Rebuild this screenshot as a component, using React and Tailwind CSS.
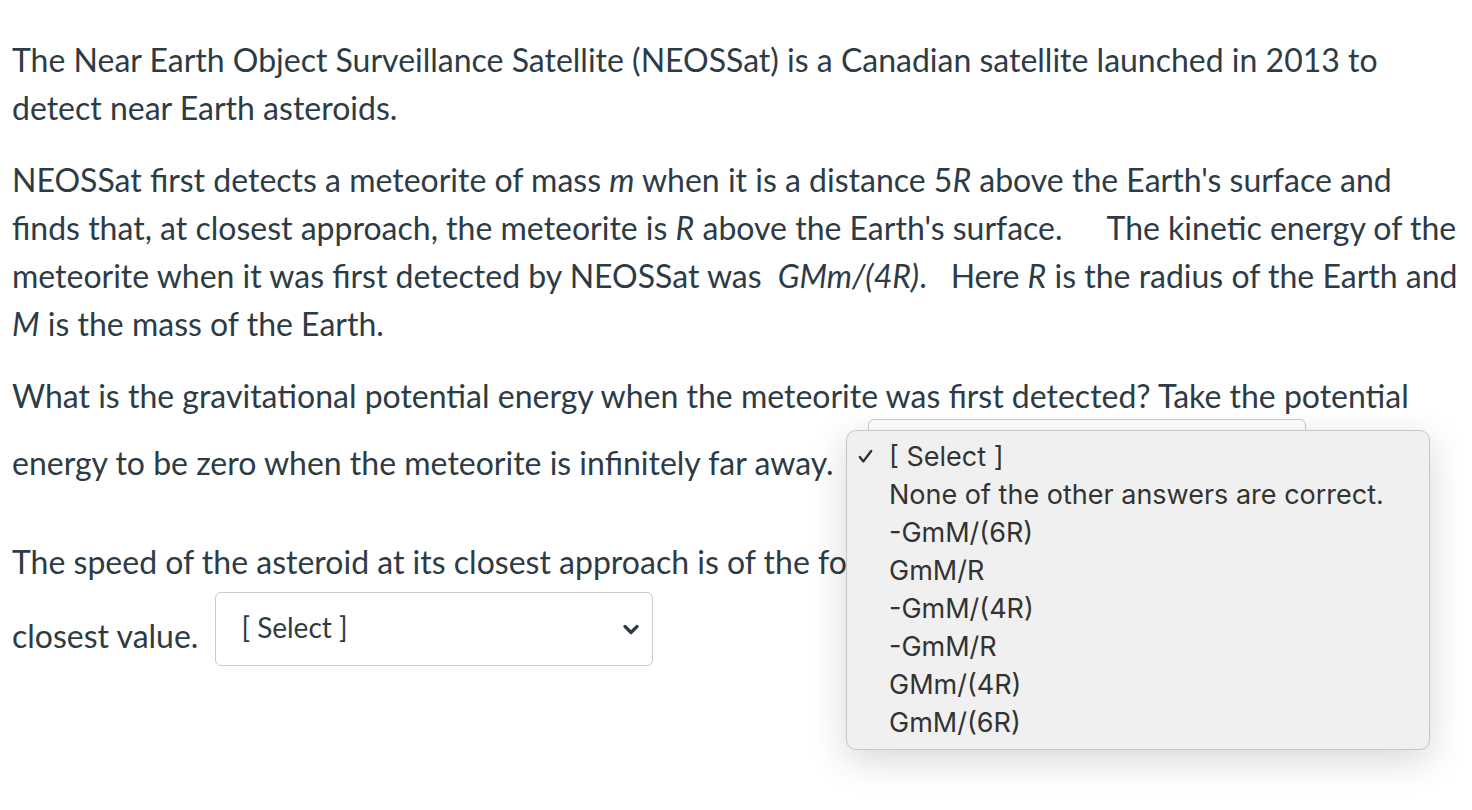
const options = [
  '[ Select ]',
  'None of the other answers are correct.',
  '-GmM/(6R)',
  'GmM/R',
  '-GmM/(4R)',
  '-GmM/R',
  'GMm/(4R)',
  'GmM/(6R)',
]

function Chevron() {
  return (
    <svg width="16" height="11" viewBox="0 0 16 11" className="shrink-0">
      <path d="M2 2.5 L8 8.5 L14 2.5" fill="none" stroke="#2d3b45" strokeWidth="3.2" strokeLinecap="round" strokeLinejoin="round" />
    </svg>
  )
}

// label is left off where the open menu hides the box
function SelectBox({ className = '', label = '[ Select ]' }) {
  return (
    <div className={`w-[438px] h-[74px] shrink-0 bg-white border border-[#c7cdd1] rounded-[6px] flex items-center justify-between pl-[25px] pr-[13px] ${className}`}>
      <span className="text-[28px] leading-none -mt-[4px]">{label}</span>
      <Chevron />
    </div>
  )
}

function Popup() {
  return (
    <div className="absolute left-[846px] top-[430px] w-[584px] h-[320px] bg-[#f0f0f0] border border-[#c6c6c6] rounded-[10px] shadow-[0_10px_36px_rgba(0,0,0,0.16)] pt-[7px] font-['Inter',sans-serif] text-[#333333]">
      {options.map((o, i) => (
        <div key={o} className="h-[37.9px] flex items-center">
          <div className="w-[42px] flex justify-end pr-[16px]">
            {i === 0 && (
              <svg width="15" height="15" viewBox="0 0 15 15">
                <path d="M1.8 8 L5.4 12.4 L13.2 2" fill="none" stroke="#333" strokeWidth="2.4" strokeLinecap="round" strokeLinejoin="round" />
              </svg>
            )}
          </div>
          <span className="text-[27px] leading-none">{o}</span>
        </div>
      ))}
    </div>
  )
}

export default function App() {
  return (
    <div className="relative min-h-[810px] bg-white font-['Lato',sans-serif] text-[#2d3b45] text-[32px] leading-[48px] px-[12px] pt-[36px] whitespace-nowrap">
      <p className="mb-[24px]">
        The Near Earth Object Surveillance Satellite (NEOSSat) is a Canadian satellite launched in 2013 to<br />
        detect near Earth asteroids.
      </p>
      <p className="mb-[24px]">
        NEOSSat first detects a meteorite of mass <i>m</i> when it is a distance 5<i>R</i> above the Earth's surface and<br />
        finds that, at closest approach, the meteorite is <i>R</i> above the Earth's surface.<span className="inline-block w-[44px]" />The kinetic energy of the<br />
        meteorite when it was first detected by NEOSSat was<span className="inline-block w-[16px]" /><i>GMm/(4R)</i>.<span className="inline-block w-[24px]" />Here <i>R</i> is the radius of the Earth and<br />
        <i>M</i> is the mass of the Earth.
      </p>
      <div className="mb-[45px]">
        <p>What is the gravitational potential energy when the meteorite was first detected? Take the potential</p>
        <div className="flex items-start">
          <span className="mt-[19px]">energy to be zero when the meteorite is infinitely far away.</span>
          <SelectBox className="ml-[34px] -mt-[1px]" label="" />
        </div>
      </div>
      <div>
        <p className="w-[834px] overflow-hidden">The speed of the asteroid at its closest approach is of the form</p>
        <div className="flex items-start">
          <span className="mt-[26px]">closest value.</span>
          <SelectBox className="ml-[17px] mt-[6px]" />
        </div>
      </div>
      <Popup />
    </div>
  )
}
